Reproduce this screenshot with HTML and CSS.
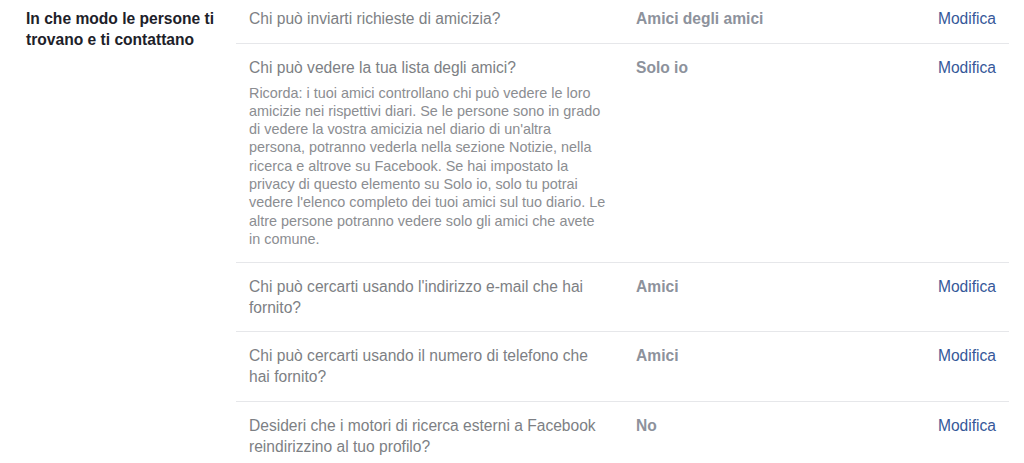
FILE: index.html
```html
<!DOCTYPE html>
<html lang="it">
<head>
    <meta charset="utf-8" />
    <title>Impostazioni sulla privacy</title>
    <link rel="stylesheet" href="styles.css">
</head>
<body>
    <div class="section">
        <h3 class="section-title">In che modo le persone ti trovano e ti contattano</h3>
        <ul class="settings">
            <li class="row">
                <div class="question">Chi può inviarti richieste di amicizia?</div>
                <div class="value">Amici degli amici</div>
                <a class="edit" href="javascript:void(0)">Modifica</a>
            </li>
            <li class="row">
                <div class="question">
                    Chi può vedere la tua lista degli amici?
                    <p class="note">Ricorda: i tuoi amici controllano chi può vedere le loro amicizie nei rispettivi diari. Se le persone sono in grado di vedere la vostra amicizia nel diario di un'altra persona, potranno vederla nella sezione Notizie, nella ricerca e altrove su Facebook. Se hai impostato la privacy di questo elemento su Solo io, solo tu potrai vedere l'elenco completo dei tuoi amici sul tuo diario. Le altre persone potranno vedere solo gli amici che avete in comune.</p>
                </div>
                <div class="value">Solo io</div>
                <a class="edit" href="javascript:void(0)">Modifica</a>
            </li>
            <li class="row">
                <div class="question">Chi può cercarti usando l'indirizzo e-mail che hai fornito?</div>
                <div class="value">Amici</div>
                <a class="edit" href="javascript:void(0)">Modifica</a>
            </li>
            <li class="row">
                <div class="question">Chi può cercarti usando il numero di telefono che hai fornito?</div>
                <div class="value">Amici</div>
                <a class="edit" href="javascript:void(0)">Modifica</a>
            </li>
            <li class="row">
                <div class="question">Desideri che i motori di ricerca esterni a Facebook reindirizzino al tuo profilo?</div>
                <div class="value">No</div>
                <a class="edit" href="javascript:void(0)">Modifica</a>
            </li>
        </ul>
    </div>
</body>
</html>
```

FILE: styles.css
```css
* {margin: 0;padding: 0;list-style-type: none;}
body {background: #fff;font: 15.6px/21px "Liberation Sans", Arial, Helvetica, sans-serif;color: #1d2129;}
/*sezione privacy*/
.section {display: flex;padding: 0 15px 0 26px;}
.section-title {width: 210px;flex: none;padding-top: 8px;font-size: 15.6px;font-weight: bold;line-height: 21px;color: #1d2129;}
.settings {flex: 1;}
.row {display: grid;grid-template-columns: 360px 1fr auto;column-gap: 27px;padding: 13px 13px 13.5px 13px;border-top: 1px solid #e6e7ea;}
.row:first-child {border-top: 0;padding-top: 8px;}
.question {color: #7d7f84;}
.note {margin-top: 6px;font-size: 14.4px;line-height: 18.3px;color: #8b8d91;}
.value {font-weight: bold;color: #8d929c;}
.edit {color: #365899;text-decoration: none;}
```
